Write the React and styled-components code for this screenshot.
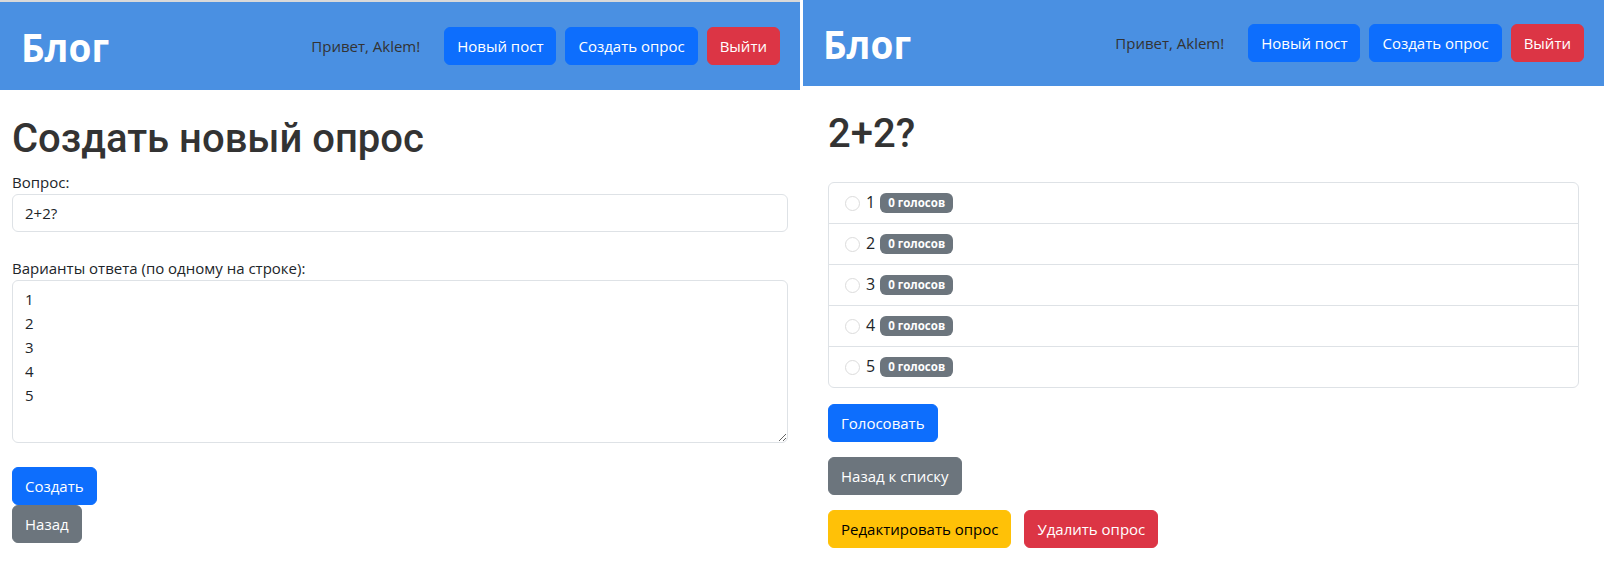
import React from "react";
import styled, { createGlobalStyle } from "styled-components";

const Global = createGlobalStyle`
  html, body { margin: 0; padding: 0; background: #fff; }
  body {
    font-family: "Open Sans", "Noto Sans", sans-serif;
    font-size: 15px;
    line-height: 1.6;
    color: #212529;
  }
  * { box-sizing: border-box; }
`;

const Screen = styled.div`
  display: flex;
  width: 1604px;
  height: 561px;
  overflow: hidden;
`;

const Pane = styled.div`
  width: ${(p) => p.$w}px;
  flex: none;
  border-top: ${(p) => (p.$strip ? "2px solid #d9d9d9" : "none")};
`;

const Divider = styled.div`
  width: 3px;
  flex: none;
  background: #fff;
`;

const Header = styled.header`
  height: ${(p) => p.$h}px;
  background: #4a90e2;
  display: flex;
  align-items: center;
  justify-content: space-between;
  padding: 0 20px 0 ${(p) => p.$pl}px;
`;

const Brand = styled.div`
  font-family: "Open Sans", sans-serif;
  font-weight: 700;
  font-size: 37px;
  line-height: 1;
  color: #fff;
  transform: scaleY(1.08);
`;

const Nav = styled.nav`
  display: flex;
  align-items: center;
  gap: 9px;
`;

const Greeting = styled.span`
  color: #333;
  font-size: 15px;
  margin-right: 15px;
`;

const colors = {
  primary: ["#0d6efd", "#fff"],
  danger: ["#dc3545", "#fff"],
  secondary: ["#6c757d", "#fff"],
  warning: ["#ffc107", "#000"],
};

const Button = styled.button`
  font-family: "Open Sans", sans-serif;
  font-size: 15px;
  line-height: 24px;
  padding: 6px 12px;
  border: 1px solid ${(p) => colors[p.$v][0]};
  background: ${(p) => colors[p.$v][0]};
  color: ${(p) => colors[p.$v][1]};
  border-radius: 6px;
  cursor: pointer;
  display: inline-block;
  white-space: nowrap;
`;

const Content = styled.main`
  padding: ${(p) => p.$pt}px ${(p) => p.$px}px 0;
`;

const Title = styled.h1`
  font-family: Roboto, sans-serif;
  font-weight: 500;
  font-size: 40px;
  line-height: 48px;
  color: #333;
  margin: 0 0 ${(p) => p.$mb}px;
`;

const Field = styled.div`
  display: flex;
  flex-direction: column;
  margin-bottom: 24px;
`;

const Label = styled.label`
  font-size: 15px;
  line-height: 24px;
  color: #212529;
`;

const TextInput = styled.input`
  font-family: "Open Sans", sans-serif;
  font-size: 15px;
  line-height: 24px;
  height: 38px;
  padding: 6px 12px;
  border: 1px solid #dee2e6;
  border-radius: 6px;
  color: #212529;
  width: 100%;
  outline: none;
`;

const TextArea = styled.textarea`
  font-family: "Open Sans", sans-serif;
  font-size: 15px;
  line-height: 24px;
  height: 163px;
  padding: 6px 12px;
  border: 1px solid #dee2e6;
  border-radius: 6px;
  color: #212529;
  width: 100%;
  resize: vertical;
  outline: none;
`;

const Stack = styled.div`
  display: flex;
  flex-direction: column;
  align-items: flex-start;
`;

const List = styled.ul`
  list-style: none;
  margin: 0 0 16px;
  padding: 0;
  border: 1px solid #dee2e6;
  border-radius: 6px;
`;

const Item = styled.li`
  display: flex;
  align-items: center;
  height: 40px;
  padding: 0 16px;
  & + & { border-top: 1px solid #dee2e6; height: 41px; }
`;

const Radio = styled.input`
  appearance: none;
  width: 15px;
  height: 15px;
  margin: 0 6px 0 0;
  border: 1px solid #dcdcdc;
  border-radius: 50%;
  background: #fff;
`;

const OptionText = styled.span`
  font-size: 16px;
  color: #212529;
  margin-right: 5px;
`;

const Badge = styled.span`
  font-family: "Open Sans", sans-serif;
  font-size: 11.5px;
  font-weight: 700;
  line-height: 12px;
  padding: 4px 8px;
  border-radius: 6px;
  background: #6c757d;
  color: #fff;
`;

const Actions = styled.div`
  display: flex;
  flex-direction: column;
  align-items: flex-start;
  gap: 15px;
`;

const ButtonRow = styled.div`
  display: flex;
  gap: 13px;
`;

function TopBar({ h, pl }) {
  return (
    <Header $h={h} $pl={pl}>
      <Brand>Блог</Brand>
      <Nav>
        <Greeting>Привет, Aklem!</Greeting>
        <Button $v="primary">Новый пост</Button>
        <Button $v="primary">Создать опрос</Button>
        <Button $v="danger">Выйти</Button>
      </Nav>
    </Header>
  );
}

export default function App() {
  const options = ["1", "2", "3", "4", "5"];
  return (
    <>
      <Global />
      <Screen>
        <Pane $w={800} $strip>
          <TopBar h={88} pl={21} />
          <Content $pt={25} $px={12}>
            <Title $mb={7}>Создать новый опрос</Title>
            <Field>
              <Label>Вопрос:</Label>
              <TextInput readOnly value="2+2?" />
            </Field>
            <Field>
              <Label>Варианты ответа (по одному на строке):</Label>
              <TextArea readOnly value={"1\n2\n3\n4\n5"} />
            </Field>
            <Stack>
              <Button $v="primary">Создать</Button>
              <Button $v="secondary">Назад</Button>
            </Stack>
          </Content>
        </Pane>
        <Divider />
        <Pane $w={801}>
          <TopBar h={86} pl={20} />
          <Content $pt={24} $px={25}>
            <Title $mb={24}>2+2?</Title>
            <List>
              {options.map((o) => (
                <Item key={o}>
                  <Radio type="radio" name="opt" readOnly />
                  <OptionText>{o}</OptionText>
                  <Badge>0 голосов</Badge>
                </Item>
              ))}
            </List>
            <Actions>
              <Button $v="primary">Голосовать</Button>
              <Button $v="secondary">Назад к списку</Button>
              <ButtonRow>
                <Button $v="warning">Редактировать опрос</Button>
                <Button $v="danger">Удалить опрос</Button>
              </ButtonRow>
            </Actions>
          </Content>
        </Pane>
      </Screen>
    </>
  );
}
